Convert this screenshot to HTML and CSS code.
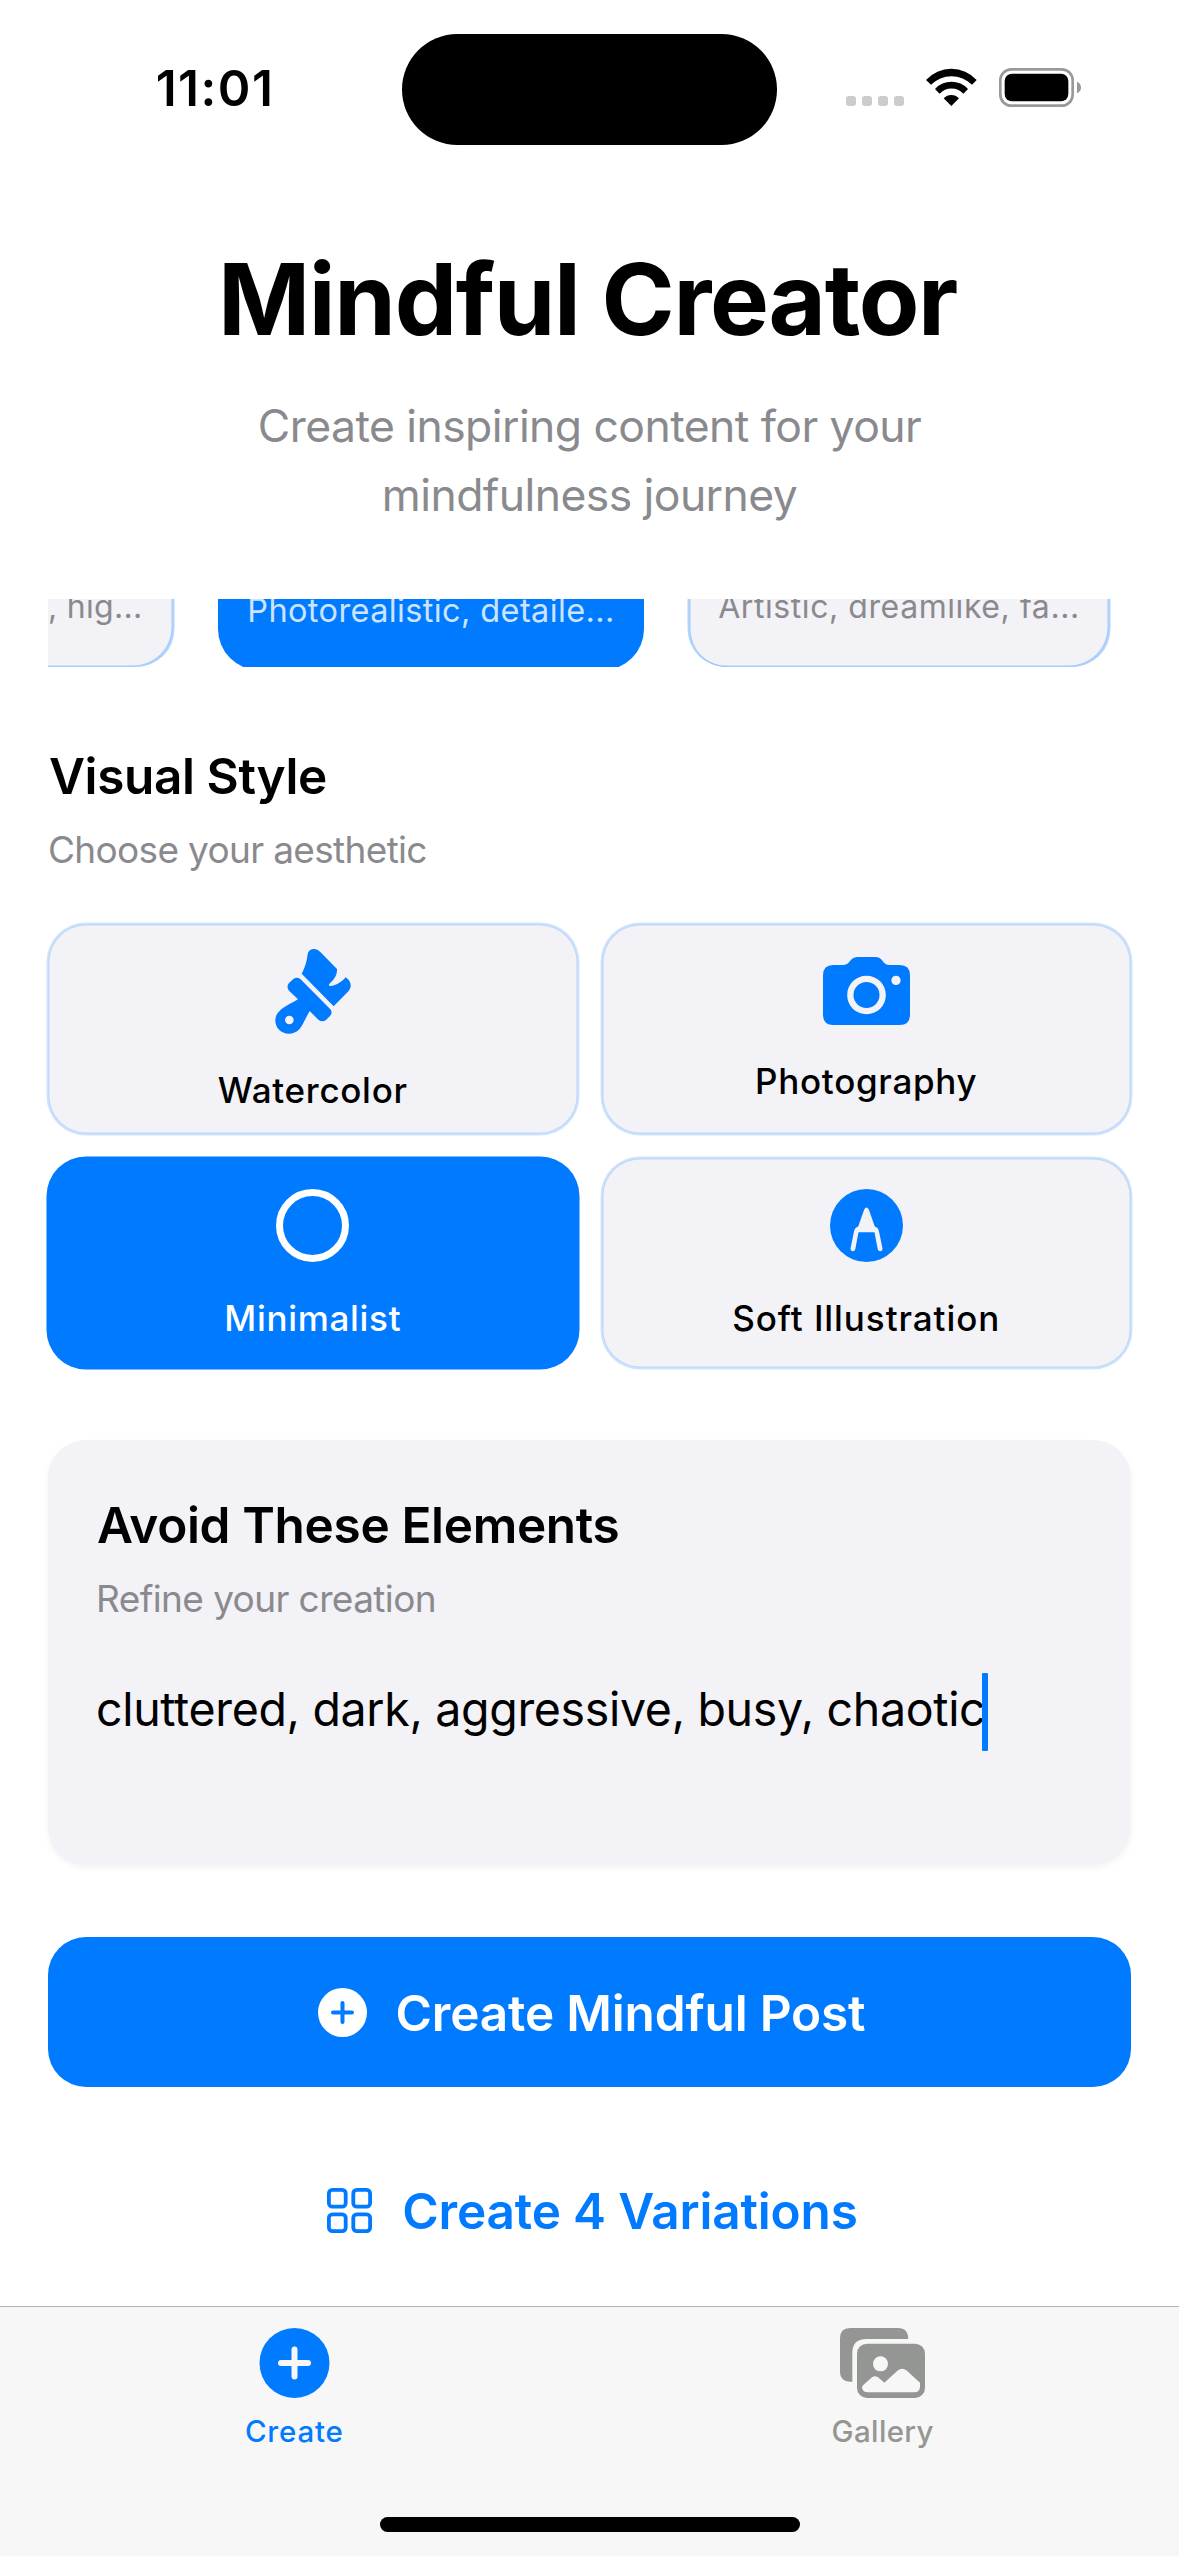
FILE: index.html
```html
<!DOCTYPE html>
<html lang="en">
<head>
<meta charset="utf-8">
<title>Mindful Creator</title>
<link rel="stylesheet" href="styles.css">
</head>
<body>
<div class="screen">
  <div class="status">
    <div class="status-time">11:01</div>
    <div class="island"></div>
    <div class="status-icons">
      <svg class="signal" viewBox="78 54 174 120"><g fill="#ccc"><rect x="78" y="138" width="30" height="30" rx="9"/><rect x="126" y="138" width="30" height="30" rx="9"/><rect x="174" y="138" width="30" height="30" rx="9"/><rect x="222" y="138" width="30" height="30" rx="9"/></g></svg>
      <svg class="wifi" viewBox="318 54 153 120"><path d="M318 90A103 103 0 0 1 470 90L456 104A87 87 0 0 0 333 104ZM345 117A67 67 0 0 1 444 117L430 131A48 48 0 0 0 359 131ZM371 145A31 31 0 0 1 417 145L394 168Z"/></svg>
      <svg class="battery" viewBox="537 54 246 120"><rect x="541" y="58" width="217" height="109" rx="33" fill="none" stroke="#999" stroke-width="8"/><rect x="554" y="71" width="191" height="83" rx="22"/><path d="M771 95Q783 100 783 112.500Q783 125 771 130Z" fill="#999"/></svg>
    </div>
  </div>

  <header class="header">
    <h1 class="title">Mindful Creator</h1>
    <p class="tagline">Create inspiring content for your<br>mindfulness journey</p>
  </header>

  <main class="content">
    <div class="templates">
      <div class="template template-first">, hig...</div>
      <div class="template template-selected">Photorealistic, detaile...</div>
      <div class="template">Artistic, dreamlike, fa...</div>
    </div>

    <section class="styles-section">
      <h2 class="heading">Visual Style</h2>
      <p class="caption">Choose your aesthetic</p>
      <div class="style-grid">
        <div class="style">
          <svg class="icon-brush" viewBox="75 57 228 255"><path d="M155 131L251 229L296 183Q306 171 300 157Q296 148 287 142L280 149Q262 165 243 168Q236 169 237 163Q252 150 257 138Q262 128 261 117L211 66Q202 56 190 57Q176 59 173 72C170 95 167 108 155 131Z"/><path fill-rule="evenodd" d="M151 147L241 238Q249 248 240 258L228 270Q217 278 206 270L179 243C168 262 158 286 148 298C132 315 105 316 88 300C72 284 72 258 88 244C100 230 125 220 144 208L117 182Q108 170 117 159L130 147Q140 139 151 147ZM131 270A13 13 0 1 0 105 270A13 13 0 1 0 131 270Z"/></svg>
          <span class="style-label">Watercolor</span>
        </div>
        <div class="style style-photo">
          <svg class="icon-camera" viewBox="69 81 261 204"><path fill-rule="evenodd" d="M100 105H132Q141 105 147 97L152 91Q161 81 173 81H227Q238 81 246 91L252 98Q258 105 268 105H299Q330 105 330 136V254Q330 285 299 285H100Q69 285 69 254V136Q69 105 100 105ZM257.500 195A58 58 0 1 0 141.500 195A58 58 0 1 0 257.500 195ZM302 151A14 14 0 1 0 274 151A14 14 0 1 0 302 151Z"/><circle cx="199.500" cy="195" r="39"/></svg>
          <span class="style-label">Photography</span>
        </div>
        <div class="style style-selected">
          <svg class="icon-round" viewBox="0 0 73 73"><circle cx="36.500" cy="36.500" r="33" fill="none" stroke="#fff" stroke-width="7"/></svg>
          <span class="style-label">Minimalist</span>
        </div>
        <div class="style">
          <svg class="icon-round" viewBox="-36.500 -36.500 73 73"><circle r="36.500"/><path fill="#f2f2f7" d="M-2.400 -15.800Q0 -20 2.400 -15.800L8.300 .9Q11.800 2 12.500 6L16 23Q16.200 25.500 13.900 25.700Q11.600 25.700 11.200 23.500L8 6.800H-8L-11.200 23.500Q-11.600 25.700 -13.900 25.700Q-16.200 25.500 -16 23L-12.500 6Q-11.800 2 -8.300 .9Z"/></svg>
          <span class="style-label style-label-long">Soft Illustration</span>
        </div>
      </div>
    </section>

    <section class="avoid">
      <h2 class="heading heading-avoid">Avoid These Elements</h2>
      <p class="caption">Refine your creation</p>
      <div class="field"><span class="field-text">cluttered, dark, aggressive, busy, chaotic</span><span class="caret"></span></div>
    </section>

    <div class="button button-primary">
      <svg class="icon-plus" viewBox="-24.500 -24.500 49 49"><circle r="24.500" fill="#fff"/><path d="M-9.500 0H9.500M0 -9.500V9.500" stroke="#007aff" stroke-width="4" stroke-linecap="round"/></svg>
      <span>Create Mindful Post</span>
    </div>
    <div class="button button-plain">
      <svg class="icon-grid" viewBox="0 0 45 45"><g fill="none" stroke="#007aff" stroke-width="3.800"><rect x="1.900" y="1.900" width="16.800" height="16.800" rx="3.500"/><rect x="26.300" y="1.900" width="16.800" height="16.800" rx="3.500"/><rect x="1.900" y="26.300" width="16.800" height="16.800" rx="3.500"/><rect x="26.300" y="26.300" width="16.800" height="16.800" rx="3.500"/></g></svg>
      <span>Create 4 Variations</span>
    </div>
  </main>

  <footer class="tabbar">
    <nav class="tabs">
      <div class="tab tab-active">
        <svg class="tab-icon" viewBox="-42.500 -35 85 70"><circle r="35"/><path d="M-13.500 0H13.500M0 -13.500V13.500" stroke="#f7f7f7" stroke-width="6" stroke-linecap="round"/></svg>
        <span class="tab-create">Create</span>
      </div>
      <div class="tab tab-gallery">
        <svg class="tab-icon" viewBox="123 84 255 210"><path d="M159 245H155Q123 245 123 214V115Q123 84 154 84H297Q327 84 328 117H202Q160 117 160 159V245Z"/><rect x="174" y="131" width="204" height="163" rx="30"/><g fill="#f7f7f7"><circle cx="244.500" cy="191.500" r="22.500"/><path d="M189 262Q189 259 192 256L219 232Q228 225 237 232L256 248L297 211Q309 202 322 211L363 248V260Q362 277 346 277H206Q190 277 189 262Z"/></g></svg>
        <span>Gallery</span>
      </div>
    </nav>
    <div class="home"></div>
  </footer>
</div>
</body>
</html>
```
FILE: styles.css
```css
* { box-sizing: border-box; margin: 0; padding: 0; }
body { background: #fff; font-family: Inter, "Liberation Sans", sans-serif; color: #000; }
svg { display: block; flex: none; }
.screen { width: 1179px; height: 2556px; display: flex; flex-direction: column; overflow: hidden; background: #fff; }

.status { height: 177px; display: grid; grid-template-columns: 402px 375px 402px; align-items: center; }
.status-time { padding: 0 0 2px 28px; text-align: center; font-size: 49.5px; font-weight: 600; line-height: 60px; letter-spacing: 1.5px; }
.island { height: 111px; margin-top: 1px; border-radius: 56px; background: #000; }
.status-icons { display: flex; justify-content: flex-end; gap: 22px; padding: 0 98px 1px 0; }
.signal { width: 58px; height: 40px; }
.wifi { width: 51px; height: 40px; }
.battery { width: 82px; height: 40px; }

.header { padding-top: 62px; text-align: center; }
.title { padding-right: 4px; font-size: 99px; font-weight: 700; line-height: 120px; letter-spacing: -1.35px; }
.tagline { margin-top: 33px; font-size: 44.5px; line-height: 69px; letter-spacing: -.57px; color: #8a8a8e; }

.content { margin-top: 69px; padding: 0 48px; display: flex; flex-direction: column; }
.templates { height: 68px; display: flex; gap: 48px; overflow: hidden; }
.template { flex: none; width: 420px; height: 68px; border-radius: 0 0 38px 38px; background: #f2f2f7; box-shadow: inset -1.5px -1.5px 0 rgba(0, 122, 255, .3), inset 1.5px 0 0 rgba(0, 122, 255, .3), 1.5px 0 0 rgba(0, 122, 255, .3), -1.5px 0 0 rgba(0, 122, 255, .3); text-align: center; font-size: 32px; line-height: 15px; letter-spacing: .57px; color: #8a8a8e; white-space: nowrap; }
.template-first { width: 125px; border-radius: 0 0 38px 0; padding-right: 37px; box-shadow: inset -1.5px -1.5px 0 rgba(0, 122, 255, .3), 1.5px 0 0 rgba(0, 122, 255, .3); text-align: right; letter-spacing: .3px; }
.template-selected { background: #007aff; box-shadow: 0 0 0 3px #007aff; font-size: 32.5px; line-height: 24.5px; letter-spacing: .38px; color: #cce4ff; }

.styles-section { margin-top: 79px; }
.heading { padding-left: 1px; font-size: 49.5px; font-weight: 600; line-height: 60px; letter-spacing: -.39px; }
.caption { margin-top: 20px; font-size: 37px; line-height: 48px; letter-spacing: -.67px; color: #8a8a8e; }
.style-grid { margin-top: 50px; display: grid; grid-template-columns: 1fr 1fr; grid-auto-rows: 210px; gap: 24px; }
.style { display: flex; flex-direction: column; align-items: center; justify-content: center; gap: 35px; padding-top: 2px; border-radius: 38px; background: #f2f2f7; box-shadow: 0 0 0 1.5px rgba(0, 122, 255, .2), inset 0 0 0 1.5px rgba(0, 122, 255, .2); fill: #007aff; }
.style-photo { padding-top: 0; }
.style-selected { background: #007aff; box-shadow: 0 0 0 1.5px #007aff; color: #fff; }
.style-label { font-size: 35px; font-weight: 500; line-height: 42px; letter-spacing: .7px; }
.style-label-long { letter-spacing: .93px; }
.icon-brush { width: 76px; height: 85px; }
.icon-camera { width: 87px; height: 68px; }
.icon-round { width: 73px; height: 73px; }

.avoid { margin-top: 72px; height: 425px; padding: 55px 49px 0; border-radius: 38px; background: #f2f2f7; box-shadow: 0 3px 6px rgba(0, 0, 0, .05); }
.heading-avoid { padding-left: 0; letter-spacing: -.33px; }
.avoid .caption { margin-left: -1px; letter-spacing: -.6px; }
.field { margin: 50px 0 0 -1px; display: flex; align-items: flex-start; }
.field-text { font-size: 46.5px; line-height: 73px; letter-spacing: -.33px; white-space: nowrap; }
.caret { width: 6px; height: 78px; margin-left: -3px; border-radius: 1px; background: #007aff; }

.button { height: 150px; display: flex; align-items: center; justify-content: center; font-size: 49.5px; font-weight: 600; line-height: 60px; letter-spacing: -.17px; }
.button-primary { margin-top: 72px; padding: 1px 0 0 4px; gap: 29px; border-radius: 38px; background: #007aff; color: #fff; }
.button-plain { margin-top: 49px; padding-left: 6px; gap: 30px; color: #007aff; }
.icon-plus { width: 49px; height: 49px; }
.icon-grid { width: 45px; height: 45px; margin-top: -2px; }

.tabbar { margin-top: auto; height: 250px; border-top: 1px solid #b2b3b2; background: #f7f7f7; display: flex; flex-direction: column; align-items: center; }
.tabs { width: 100%; padding-top: 21px; display: flex; }
.tab { flex: 1; display: flex; flex-direction: column; align-items: center; gap: 15px; font-size: 29.5px; font-weight: 500; line-height: 36px; letter-spacing: .36px; color: #949693; fill: #949693; }
.tab-active { color: #007aff; fill: #007aff; }
.tab-gallery { padding-right: 2px; }
.tab-create { letter-spacing: .78px; }
.tab-icon { width: 85px; height: 70px; }
.home { margin-top: 68px; width: 420px; height: 15px; border-radius: 8px; background: #000; }
```
